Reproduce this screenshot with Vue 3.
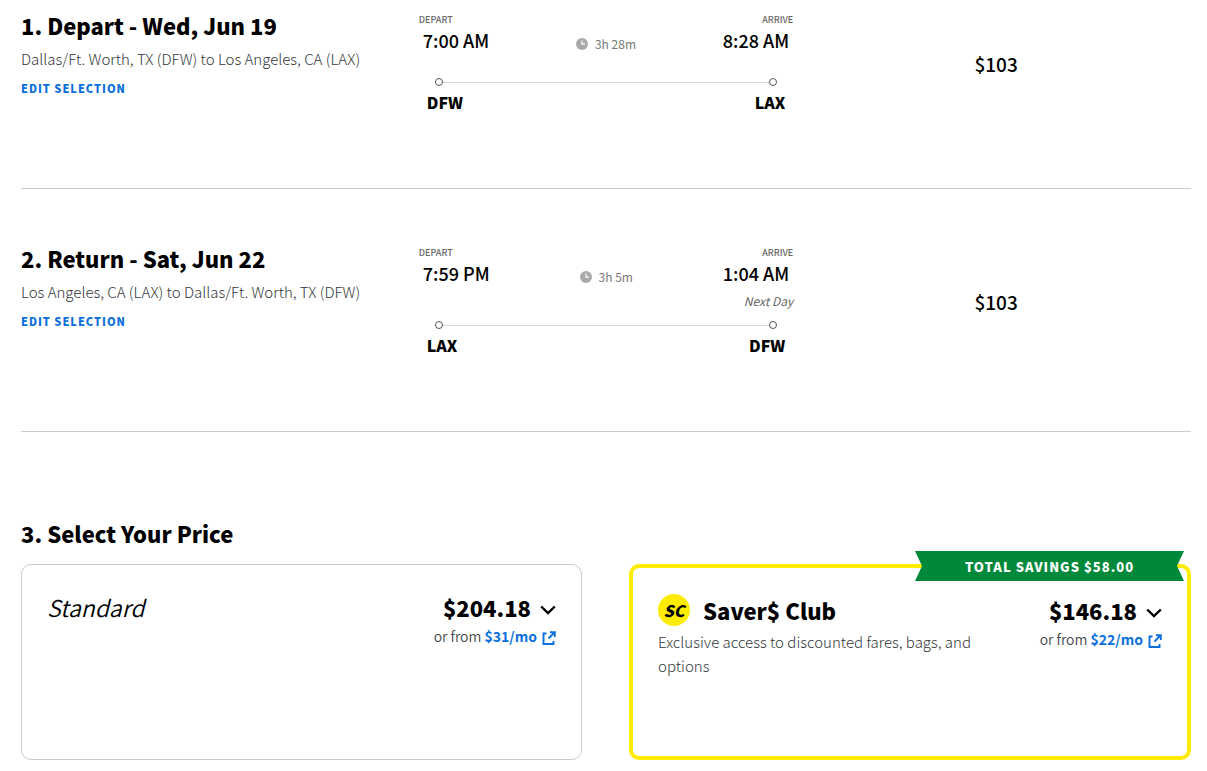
<script setup>
const flights = [
  {
    title: '1. Depart - Wed, Jun 19',
    route: 'Dallas/Ft. Worth, TX (DFW) to Los Angeles, CA (LAX)',
    departTime: '7:00 AM',
    arriveTime: '8:28 AM',
    duration: '3h 28m',
    from: 'DFW',
    to: 'LAX',
    nextDay: false,
    price: '$103'
  },
  {
    title: '2. Return - Sat, Jun 22',
    route: 'Los Angeles, CA (LAX) to Dallas/Ft. Worth, TX (DFW)',
    departTime: '7:59 PM',
    arriveTime: '1:04 AM',
    duration: '3h 5m',
    from: 'LAX',
    to: 'DFW',
    nextDay: true,
    price: '$103'
  }
]

const fares = [
  { name: 'Standard', club: false, price: '$204.18', monthly: '$31/mo' },
  {
    name: 'Saver$ Club',
    club: true,
    price: '$146.18',
    monthly: '$22/mo',
    note: 'Exclusive access to discounted fares, bags, and options',
    savings: 'TOTAL SAVINGS $58.00'
  }
]
</script>

<template>
  <main class="page">
    <section v-for="flight in flights" :key="flight.title" class="flight">
      <div class="summary">
        <h2 class="heading">{{ flight.title }}</h2>
        <p class="route">{{ flight.route }}</p>
        <a class="edit" href="#">EDIT SELECTION</a>
      </div>

      <div class="itinerary">
        <div class="times">
          <div class="stop">
            <span class="label">DEPART</span>
            <span class="time">{{ flight.departTime }}</span>
          </div>
          <div class="duration">
            <svg class="clock" viewBox="0 0 12 12" aria-hidden="true">
              <circle cx="6" cy="6" r="6" fill="#a9a9a9" />
              <path d="M6 2.5V6.2H9" fill="none" stroke="#fff" stroke-width="1.2" />
            </svg>
            <span>{{ flight.duration }}</span>
          </div>
          <div class="stop stop-end">
            <span class="label">ARRIVE</span>
            <span class="time">{{ flight.arriveTime }}</span>
            <span v-if="flight.nextDay" class="next-day">Next Day</span>
          </div>
        </div>
        <div class="track">
          <span class="dot"></span>
          <span class="line"></span>
          <span class="dot"></span>
        </div>
        <div class="codes">
          <span>{{ flight.from }}</span>
          <span>{{ flight.to }}</span>
        </div>
      </div>

      <div class="flight-price">{{ flight.price }}</div>
    </section>

    <section class="pricing">
      <h2 class="heading">3. Select Your Price</h2>
      <div class="fares">
        <article v-for="fare in fares" :key="fare.name" class="fare" :class="{ club: fare.club }">
          <div v-if="fare.savings" class="ribbon">{{ fare.savings }}</div>
          <div class="fare-info">
            <div class="fare-title">
              <span v-if="fare.club" class="badge">SC</span>
              <h3 class="fare-name">{{ fare.name }}</h3>
            </div>
            <p v-if="fare.note" class="note">{{ fare.note }}</p>
          </div>
          <div class="fare-cost">
            <button class="amount" type="button">
              <span>{{ fare.price }}</span>
              <svg class="chevron" viewBox="0 0 16 10" aria-hidden="true">
                <path d="M1.2 1.5L8 8L14.8 1.5" fill="none" stroke="#000" stroke-width="2.4" />
              </svg>
            </button>
            <p class="monthly">
              or from
              <a href="#">{{ fare.monthly }}<svg class="external" viewBox="0 0 14 14" aria-hidden="true">
                <path d="M4.5 2.5H1.5V13H11.5V10M8 1.2H12.8V6M12.8 1.2L6.5 7.5" fill="none" stroke="#0a6fdc" stroke-width="1.9" />
              </svg></a>
            </p>
          </div>
        </article>
      </div>
    </section>
  </main>
</template>

<style>
body {
  margin: 0;
  background: #fff;
}
</style>

<style scoped>
.page {
  padding: 0 16px 11px 21px;
  font-family: "Noto Sans CJK SC", "Noto Sans", sans-serif;
  color: #000;
}

h2,
h3,
p {
  margin: 0;
}

a {
  color: #0a6fdc;
  text-decoration: none;
}

.flight {
  display: grid;
  grid-template-columns: 34fr 32fr 34fr;
  padding: 52px 0 74px;
  border-bottom: 1px solid #ccc;
}

.flight:first-child {
  padding-top: 8px;
}

.heading {
  padding-top: 1px;
  font-size: 22px;
  line-height: 32px;
  font-weight: 900;
}

.route {
  margin-top: 6px;
  font-size: 15px;
  line-height: 24px;
  font-weight: 300;
  color: #33373c;
}

.edit {
  display: inline-block;
  margin-top: 7px;
  font-size: 11px;
  line-height: 20px;
  font-weight: 900;
  letter-spacing: 1px;
}

.itinerary {
  padding-top: 6px;
}

.times {
  display: flex;
  justify-content: space-between;
  min-height: 54px;
}

.stop {
  display: flex;
  flex-direction: column;
}

.stop-end {
  align-items: flex-end;
}

.label {
  font-size: 9px;
  line-height: 12px;
  font-weight: 500;
  color: #666;
}

.time {
  padding: 0 4px;
  font-size: 18px;
  line-height: 28px;
  font-weight: 500;
}

.next-day {
  margin-top: 4px;
  font-size: 12px;
  line-height: 20px;
  font-style: italic;
  color: #666;
}

.duration {
  display: flex;
  align-items: center;
  gap: 7px;
  height: 20px;
  margin-top: 20px;
  font-size: 12px;
  line-height: 20px;
  color: #777;
}

.clock {
  width: 12px;
  height: 12px;
}

.track {
  display: flex;
  align-items: center;
  margin: 10px 16px 0;
}

.dot {
  box-sizing: border-box;
  width: 8px;
  height: 8px;
  border: 1px solid #555;
  border-radius: 50%;
}

.line {
  flex: 1;
  height: 1px;
  background: #d4d4d4;
}

.codes {
  display: flex;
  justify-content: space-between;
  margin-top: 4px;
  padding: 0 8px;
  font-size: 16px;
  line-height: 24px;
  font-weight: 900;
}

.flight-price {
  align-self: center;
  padding: 6px 0 0 8px;
  font-size: 19px;
  line-height: 28px;
  font-weight: 500;
  text-align: center;
}

.pricing {
  padding-top: 84px;
}

.fares {
  display: grid;
  grid-template-columns: 561fr 562fr;
  gap: 47px;
  margin-top: 15px;
}

.fare {
  position: relative;
  box-sizing: border-box;
  display: flex;
  justify-content: space-between;
  min-height: 196px;
  padding: 26px 25px;
  border: 1px solid #ccc;
  border-radius: 10px;
}

.fare.club {
  border: 4px solid #ffec00;
}

.ribbon {
  position: absolute;
  top: -17px;
  right: 3px;
  width: 269px;
  height: 30px;
  font-size: 13px;
  line-height: 31px;
  font-weight: 900;
  letter-spacing: 1px;
  text-align: center;
  color: #fff;
  background: #00893a;
  clip-path: polygon(0 0, 100% 0, calc(100% - 7px) 50%, 100% 100%, 0 100%, 7px 50%);
}

.fare-info {
  max-width: 330px;
}

.fare-title {
  display: flex;
  align-items: center;
  gap: 13px;
}

.fare-name {
  font-size: 23px;
  line-height: 32px;
  font-weight: 350;
  font-style: italic;
}

.club .fare-name {
  font-size: 22px;
  font-weight: 900;
  font-style: normal;
}

.badge {
  width: 32px;
  font-size: 16px;
  line-height: 32px;
  font-weight: 900;
  font-style: italic;
  text-align: center;
  background: #ffec00;
  border-radius: 50%;
}

.note {
  margin-top: 4px;
  font-size: 15px;
  line-height: 24px;
  font-weight: 300;
  color: #33373c;
}

.fare-cost {
  display: flex;
  flex-direction: column;
  align-items: flex-end;
}

.amount {
  display: flex;
  align-items: center;
  gap: 9px;
  padding: 0;
  border: 0;
  background: none;
  font-family: inherit;
  font-size: 22px;
  line-height: 32px;
  font-weight: 900;
  color: #000;
  cursor: pointer;
}

.chevron {
  width: 16px;
  height: 10px;
  margin-top: 6px;
}

.monthly {
  margin-top: 1px;
  font-size: 14px;
  line-height: 24px;
  font-weight: 350;
  color: #44484d;
}

.monthly a {
  font-weight: 700;
}

.external {
  width: 14px;
  height: 14px;
  margin-left: 5px;
  vertical-align: -3px;
}
</style>
